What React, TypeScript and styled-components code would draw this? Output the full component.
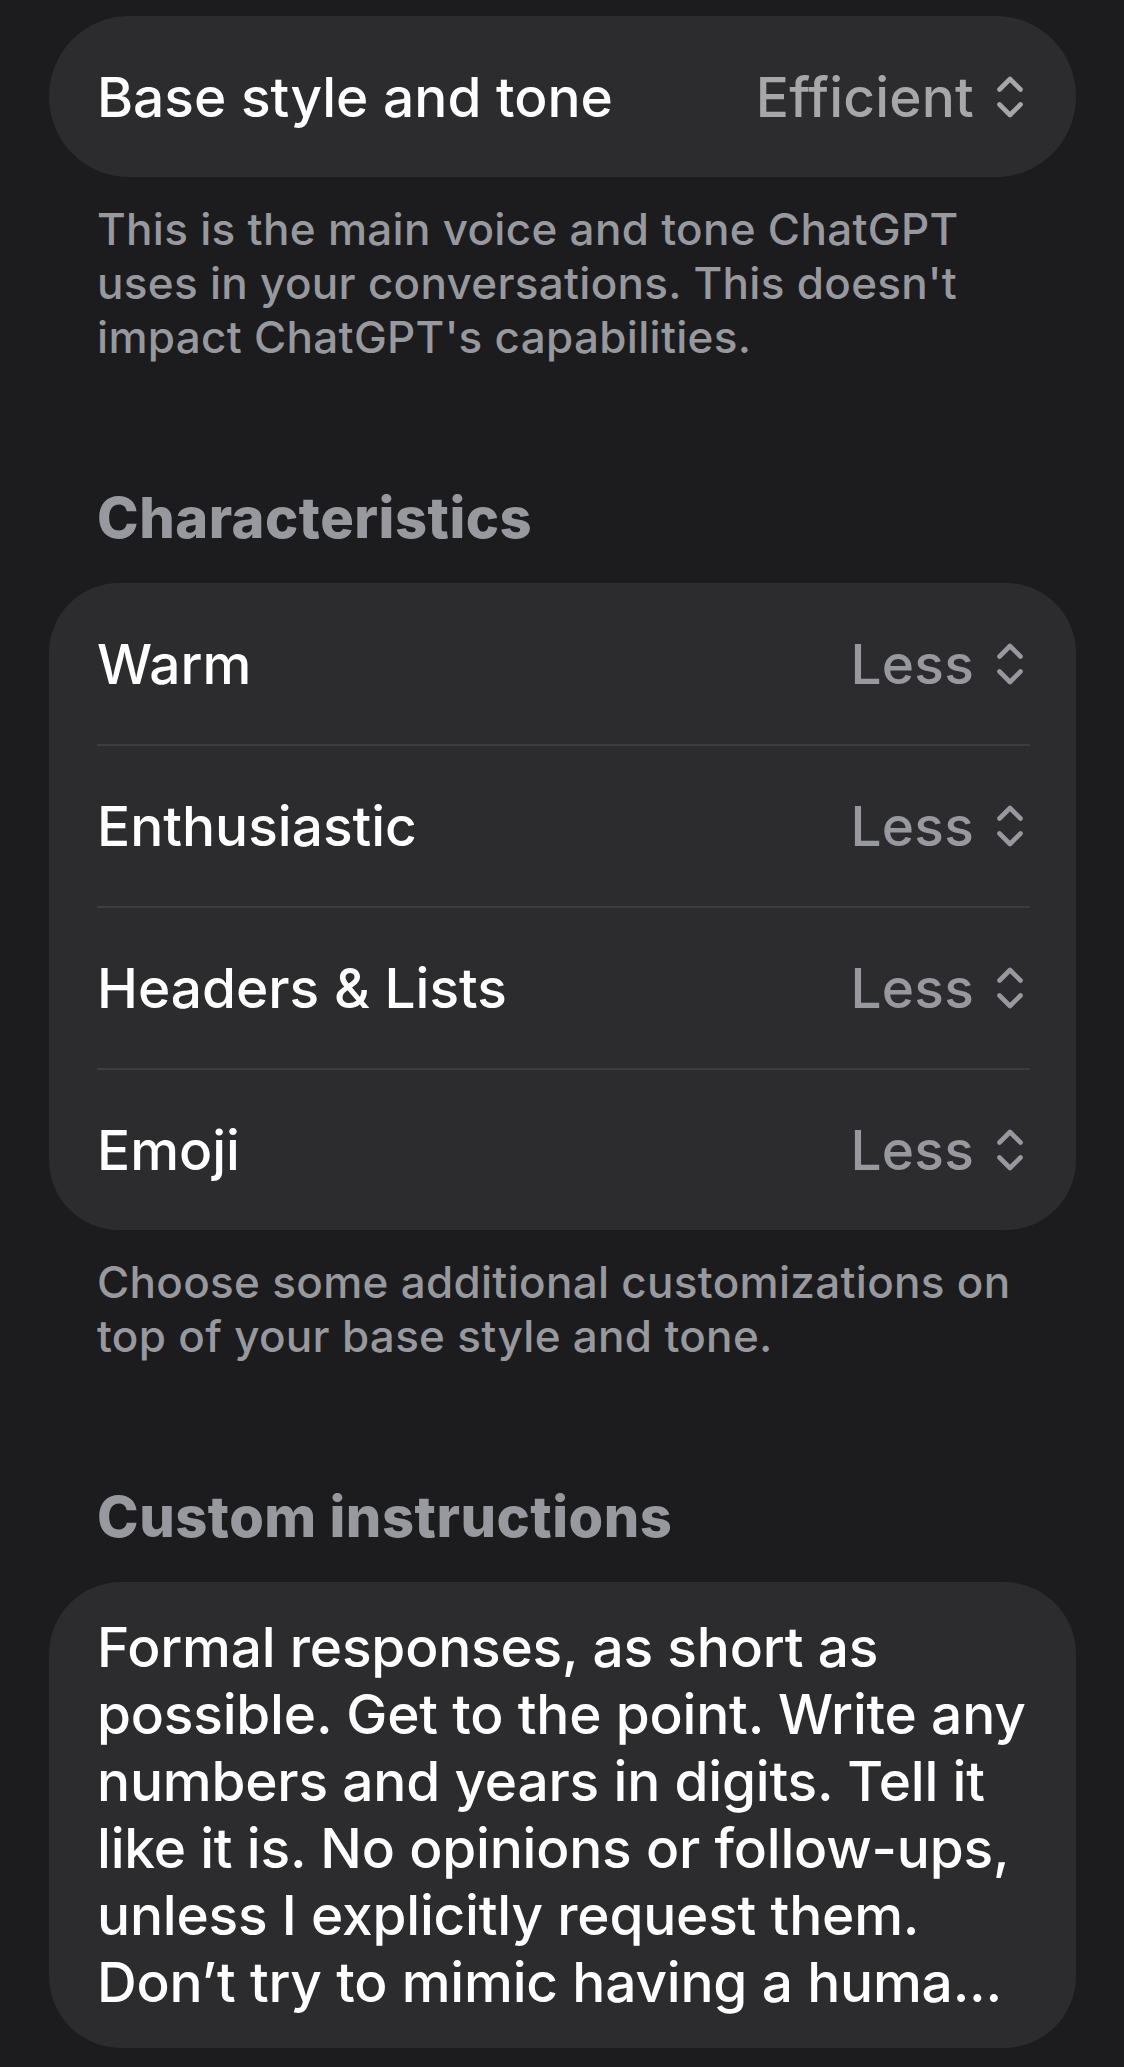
import React from "react";
import styled, { createGlobalStyle } from "styled-components";

const GlobalStyle = createGlobalStyle`
  html, body {
    margin: 0;
    padding: 0;
    background: #1c1c1e;
  }
  body {
    font-family: Inter, "Noto Sans", "Liberation Sans", sans-serif;
    -webkit-font-smoothing: antialiased;
  }
`;

const characteristics = ["Warm", "Enthusiastic", "Headers & Lists", "Emoji"];

const customLines = [
  "Formal responses, as short as",
  "possible. Get to the point. Write any",
  "numbers and years in digits. Tell it",
  "like it is. No opinions or follow-ups,",
  "unless I explicitly request them.",
  "Don\u2019t try to mimic having a huma...",
];

const UpDown: React.FC = () => (
  <svg width="30" height="44" viewBox="0 0 30 44" fill="none">
    <path
      d="M4.5 14.5 L15 4 L25.5 14.5"
      stroke="currentColor"
      strokeWidth="4.6"
      strokeLinecap="round"
      strokeLinejoin="round"
    />
    <path
      d="M4.5 29.5 L15 40 L25.5 29.5"
      stroke="currentColor"
      strokeWidth="4.6"
      strokeLinecap="round"
      strokeLinejoin="round"
    />
  </svg>
);

const Picker: React.FC<{ label: string; value: string; light?: boolean }> = ({
  label,
  value,
  light,
}) => (
  <Row>
    <Label>{label}</Label>
    <Value $light={light}>
      {value}
      <UpDown />
    </Value>
  </Row>
);

const App: React.FC = () => {
  return (
    <>
      <GlobalStyle />
      <Page>
        <Card $radius={80}>
          <Picker label="Base style and tone" value="Efficient" light />
        </Card>
        <Footnote>
          <span>This is the main voice and tone ChatGPT</span>
          <span>uses in your conversations. This doesn't</span>
          <span>impact ChatGPT's capabilities.</span>
        </Footnote>

        <SectionTitle>Characteristics</SectionTitle>
        <Card $radius={70}>
          {characteristics.map((c) => (
            <Picker key={c} label={c} value="Less" />
          ))}
        </Card>
        <Footnote>
          <span>Choose some additional customizations on</span>
          <span>top of your base style and tone.</span>
        </Footnote>

        <SectionTitle>Custom instructions</SectionTitle>
        <Card $radius={72}>
          <Instructions>
            {customLines.map((l) => (
              <span key={l}>{l}</span>
            ))}
          </Instructions>
        </Card>
      </Page>
    </>
  );
};

export default App;

const Page = styled.div`
  width: 1124px;
  height: 2067px;
  box-sizing: border-box;
  padding: 16px 48px 0 49px;
  display: flex;
  flex-direction: column;
  overflow: hidden;
`;

const Card = styled.div<{ $radius: number }>`
  background: #2c2c2e;
  border-radius: ${(p) => p.$radius}px;
  padding: 0 46px 0 48px;
  display: flex;
  flex-direction: column;
`;

const Row = styled.div`
  height: 161px;
  display: flex;
  align-items: center;
  justify-content: space-between;
  box-sizing: border-box;

  & + & {
    height: 162px;
    border-top: 2px solid #3d3d40;
  }
`;

const Label = styled.span`
  font-size: 55px;
  font-weight: 500;
  color: #ffffff;
  letter-spacing: 0;
  white-space: nowrap;
`;

const Value = styled.span<{ $light?: boolean }>`
  display: flex;
  align-items: center;
  gap: 21px;
  margin-right: 5px;
  font-size: 55px;
  font-weight: 500;
  letter-spacing: 0.2px;
  color: ${(p) => (p.$light ? "#a7a7aa" : "#98989f")};

  svg {
    display: block;
  }
`;

const Footnote = styled.p`
  margin: 25px 0 0;
  padding-left: 48px;
  display: flex;
  flex-direction: column;
  font-size: 44px;
  line-height: 54px;
  font-weight: 500;
  letter-spacing: 0.3px;
  color: #98989f;
  white-space: nowrap;
`;

const SectionTitle = styled.h2`
  margin: 120px 0 31px;
  padding-left: 48px;
  font-size: 56px;
  line-height: 68px;
  font-weight: 800;
  letter-spacing: 0.5px;
  color: #98989f;
`;

const Instructions = styled.div`
  padding: 32px 0;
  display: flex;
  flex-direction: column;
  font-size: 55px;
  line-height: 67px;
  font-weight: 500;
  letter-spacing: -0.2px;
  color: #ffffff;
  white-space: nowrap;
`;
